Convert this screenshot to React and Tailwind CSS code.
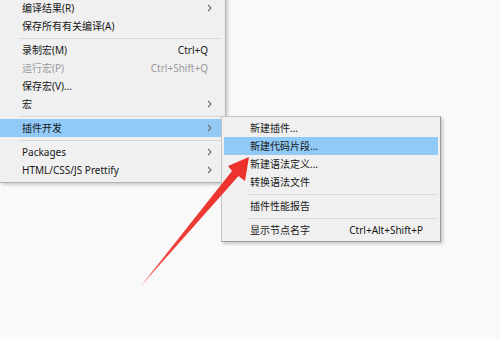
const font = "font-['Noto_Sans','Noto_Sans_CJK_SC',sans-serif]";

function Chevron() {
  return (
    <svg width="5" height="8" viewBox="0 0 5 8" className="shrink-0">
      <path d="M1 1 L4 4 L1 7" fill="none" stroke="#6b6b6b" strokeWidth="1.1" />
    </svg>
  );
}

function Row({ label, shortcut, sub, active, disabled, right = "pr-[10px]" }) {
  return (
    <div
      className={`flex h-[18px] items-center justify-between pl-[22px] ${right} ${
        active ? "bg-[#91c9f7]" : ""
      } ${disabled ? "text-[#9a9a9a]" : "text-[#161616]"}`}
    >
      <span>{label}</span>
      {shortcut && <span>{shortcut}</span>}
      {sub && <Chevron />}
    </div>
  );
}

function Sep({ left }) {
  return (
    <div className={`flex h-[6px] items-center ${left}`}>
      <div className="h-px w-full bg-[#d9d9d9]" />
    </div>
  );
}

function SubRow({ label, shortcut, active }) {
  return (
    <div
      className={`flex h-[18px] items-center justify-between pl-[26px] pr-[15px] text-[#161616] ${
        active ? "bg-[#91c9f7]" : ""
      }`}
    >
      <span>{label}</span>
      {shortcut && <span>{shortcut}</span>}
    </div>
  );
}

export default function App() {
  return (
    <div className={`relative h-[339px] w-[500px] overflow-hidden bg-[#f9f9f9] text-[10px] ${font}`}>
      {/* main menu, cropped at the top */}
      <div className="absolute left-0 top-[-4px] w-[226px] border-r border-b border-[#b4b4b4] bg-[#f0f0f0] py-[3px] pr-[3px] shadow-[2px_2px_3px_rgba(0,0,0,0.18)]">
        <Row label="编译结果(R)" sub />
        <Row label="保存所有有关编译(A)" />
        <Sep left="pl-[18px]" />
        <Row label="录制宏(M)" shortcut="Ctrl+Q" right="pr-[14px]" />
        <Row label="运行宏(P)" shortcut="Ctrl+Shift+Q" right="pr-[14px]" disabled />
        <Row label="保存宏(V)..." />
        <Row label="宏" sub />
        <Sep left="pl-[18px]" />
        <Row label="插件开发" sub active />
        <Sep left="pl-[18px]" />
        <Row label="Packages" sub />
        <Row label="HTML/CSS/JS Prettify" sub />
      </div>

      {/* submenu */}
      <div className="absolute left-[221px] top-[116px] w-[220px] border border-[#c4c4c4] border-r-[#9c9c9c] border-b-[#9c9c9c] bg-[#f0f0f0] px-[2px] py-[2px] shadow-[2px_2px_3px_rgba(0,0,0,0.2)]">
        <SubRow label="新建插件..." />
        <SubRow label="新建代码片段..." active />
        <SubRow label="新建语法定义..." />
        <SubRow label="转换语法文件" />
        <Sep left="pl-[24px]" />
        <SubRow label="插件性能报告" />
        <Sep left="pl-[24px]" />
        <SubRow label="显示节点名字" shortcut="Ctrl+Alt+Shift+P" />
      </div>

      {/* red arrow */}
      <svg className="absolute left-0 top-0" width="500" height="339" viewBox="0 0 500 339">
        <defs>
          <linearGradient id="ar" x1="140" y1="287" x2="249" y2="157" gradientUnits="userSpaceOnUse">
            <stop offset="0" stopColor="#f06a66" />
            <stop offset="0.3" stopColor="#ee3f3a" />
            <stop offset="1" stopColor="#ec2f2b" />
          </linearGradient>
        </defs>
        <polygon
          points="249,157 245,181 238.5,176 140,287 232,171 228,166"
          fill="url(#ar)"
        />
      </svg>
    </div>
  );
}
